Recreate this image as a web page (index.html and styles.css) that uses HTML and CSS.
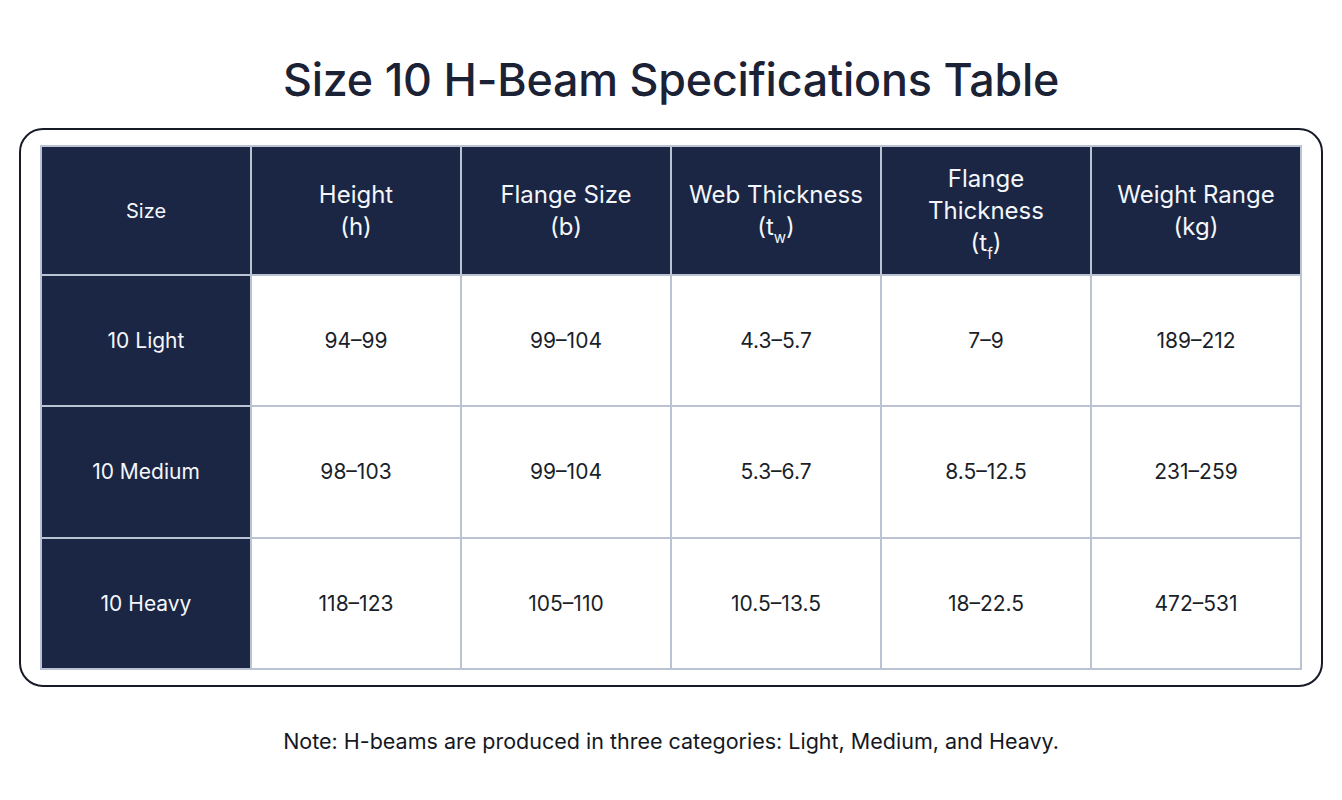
FILE: index.html
```html
<!DOCTYPE html>
<html lang="en">
<head>
<meta charset="utf-8">
<title>Size 10 H-Beam Specifications Table</title>
<link rel="stylesheet" href="styles.css">
</head>
<body>
<main class="page">
  <h1 class="title">Size 10 H-Beam Specifications Table</h1>
  <section class="card">
    <table class="spec">
      <thead>
        <tr>
          <th class="size-head">Size</th>
          <th>Height<br>(h)</th>
          <th>Flange Size<br>(b)</th>
          <th>Web Thickness<br>(t<sub>w</sub>)</th>
          <th>Flange<br>Thickness<br>(t<sub>f</sub>)</th>
          <th>Weight Range<br>(kg)</th>
        </tr>
      </thead>
      <tbody>
        <tr>
          <th class="row-head">10 Light</th>
          <td>94–99</td>
          <td>99–104</td>
          <td>4.3–5.7</td>
          <td>7–9</td>
          <td>189–212</td>
        </tr>
        <tr>
          <th class="row-head">10 Medium</th>
          <td>98–103</td>
          <td>99–104</td>
          <td>5.3–6.7</td>
          <td>8.5–12.5</td>
          <td>231–259</td>
        </tr>
        <tr>
          <th class="row-head">10 Heavy</th>
          <td>118–123</td>
          <td>105–110</td>
          <td>10.5–13.5</td>
          <td>18–22.5</td>
          <td>472–531</td>
        </tr>
      </tbody>
    </table>
  </section>
  <p class="note">Note: H-beams are produced in three categories: Light, Medium, and Heavy.</p>
</main>
</body>
</html>
```
FILE: styles.css
```css
html, body {
  margin: 0;
  padding: 0;
  background: #ffffff;
}
body {
  font-family: Inter, "Open Sans", "Liberation Sans", sans-serif;
  color: #1b1f2a;
}
.page {
  width: 1342px;
  height: 800px;
  display: flex;
  flex-direction: column;
  align-items: center;
  box-sizing: border-box;
  padding-top: 52px;
}
.title {
  margin: 0;
  font-size: 44.8px;
  line-height: 56px;
  font-weight: 500;
  color: #1c2236;
  letter-spacing: -0.2px;
}
.card {
  margin-top: 20px;
  width: 1304px;
  height: 559px;
  box-sizing: border-box;
  border: 2px solid #171b28;
  border-radius: 24px;
  padding: 15px 19px;
  background: #ffffff;
}
.spec {
  width: 1262px;
  height: 525px;
  border-collapse: collapse;
  table-layout: fixed;
}
.spec th, .spec td {
  border: 2px solid #b9c3d2;
  text-align: center;
  vertical-align: middle;
  padding: 0 6px;
}
.spec thead th {
  background: #1a2644;
  color: #f4f6fa;
  font-weight: 400;
  font-size: 24px;
  line-height: 32px;
  height: 127px;
}
.spec thead th.size-head {
  font-size: 20px;
}
.spec sub {
  font-size: 15px;
  line-height: 0;
  vertical-align: -8px;
}
.row-head {
  background: #1a2644;
  color: #f4f6fa;
  font-weight: 400;
  font-size: 21px;
}
.spec td {
  background: #ffffff;
  color: #1b1f2a;
  font-size: 21px;
}
.note {
  margin: 41px 0 0;
  font-size: 21.5px;
  color: #15181f;
}
```
